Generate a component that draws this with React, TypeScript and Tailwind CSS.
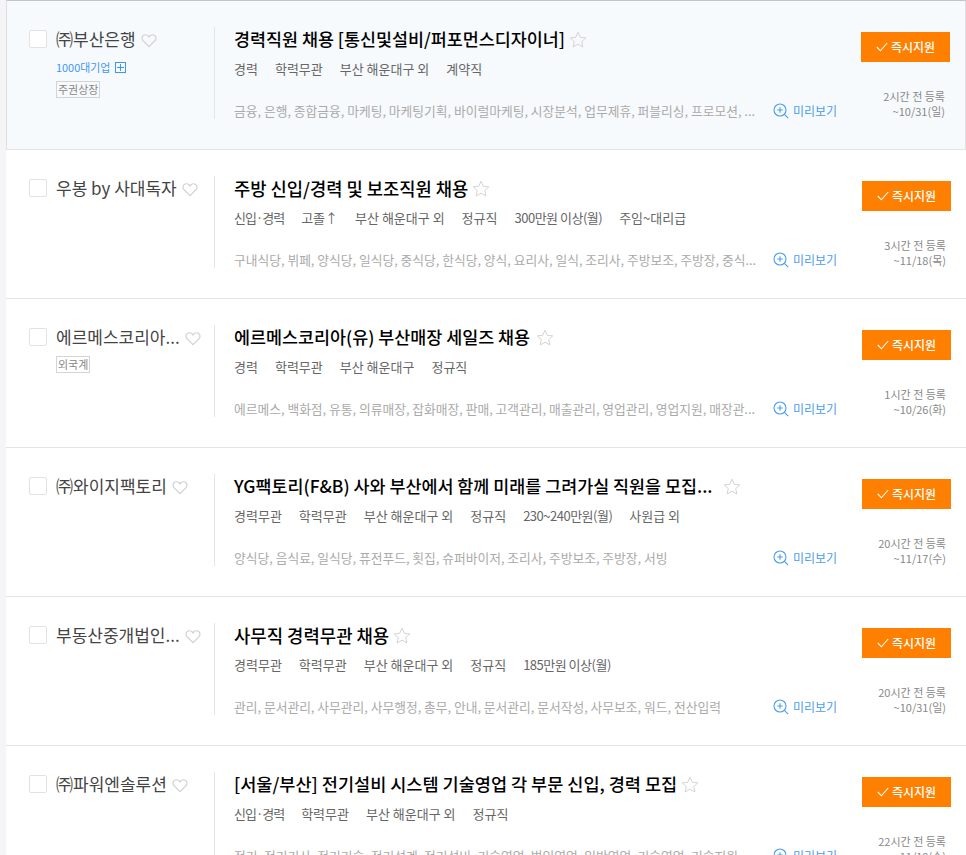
const FONT = "font-['Noto_Sans_CJK_KR','Noto_Sans',sans-serif]";

type Job = {
  company: string; tag?: string; bigTag?: boolean; titleSize: string; starGap: string;
  title: string; meta: string[]; skills: string; time: string; due: string; dueSuffix: string;
};

const jobs: Job[] = [
  { company: "㈜부산은행", bigTag: true, tag: "주권상장", titleSize: "text-[17.4px]", starGap: "ml-[4px]", title: "경력직원 채용 [통신및설비/퍼포먼스디자이너]", meta: ["경력", "학력무관", "부산 해운대구 외", "계약직"], skills: "금융, 은행, 종합금융, 마케팅, 마케팅기획, 바이럴마케팅, 시장분석, 업무제휴, 퍼블리싱, 프로모션, ...", time: "2시간 전 등록", due: "~10/31", dueSuffix: "(일)" },
  { company: "우봉 by 사대독자", titleSize: "text-[17.7px]", starGap: "ml-[4px]", title: "주방 신입/경력 및 보조직원 채용", meta: ["신입·경력", "고졸↑", "부산 해운대구 외", "정규직", "300만원 이상(월)", "주임~대리급"], skills: "구내식당, 뷔페, 양식당, 일식당, 중식당, 한식당, 양식, 요리사, 일식, 조리사, 주방보조, 주방장, 중식...", time: "3시간 전 등록", due: "~11/18", dueSuffix: "(목)" },
  { company: "에르메스코리아...", tag: "외국계", titleSize: "text-[17.4px]", starGap: "ml-[6px]", title: "에르메스코리아(유) 부산매장 세일즈 채용", meta: ["경력", "학력무관", "부산 해운대구", "정규직"], skills: "에르메스, 백화점, 유통, 의류매장, 잡화매장, 판매, 고객관리, 매출관리, 영업관리, 영업지원, 매장관...", time: "1시간 전 등록", due: "~10/26", dueSuffix: "(화)" },
  { company: "㈜와이지팩토리", titleSize: "text-[17.4px]", starGap: "ml-[10px]", title: "YG팩토리(F&B) 사와 부산에서 함께 미래를 그려가실 직원을 모집...", meta: ["경력무관", "학력무관", "부산 해운대구 외", "정규직", "230~240만원(월)", "사원급 외"], skills: "양식당, 음식료, 일식당, 퓨전푸드, 횟집, 슈퍼바이저, 조리사, 주방보조, 주방장, 서빙", time: "20시간 전 등록", due: "~11/17", dueSuffix: "(수)" },
  { company: "부동산중개법인...", titleSize: "text-[17.8px]", starGap: "ml-[4px]", title: "사무직 경력무관 채용", meta: ["경력무관", "학력무관", "부산 해운대구 외", "정규직", "185만원 이상(월)"], skills: "관리, 문서관리, 사무관리, 사무행정, 총무, 안내, 문서관리, 문서작성, 사무보조, 워드, 전산입력", time: "20시간 전 등록", due: "~10/31", dueSuffix: "(일)" },
  { company: "㈜파워엔솔루션", titleSize: "text-[17.55px]", starGap: "ml-[4px]", title: "[서울/부산] 전기설비 시스템 기술영업 각 부문 신입, 경력 모집", meta: ["신입·경력", "학력무관", "부산 해운대구 외", "정규직"], skills: "전기, 전기기사, 전기기술, 전기설계, 전기설비, 기술영업, 법인영업, 일반영업, 기술영업, 기술지원, ...", time: "22시간 전 등록", due: "~11/10", dueSuffix: "(수)" },
];

function Heart() {
  return (
    <svg width="16" height="15" viewBox="0 0 16 15" fill="none" stroke="#d0d0d0" strokeWidth="1.2" className="ml-[5px] shrink-0 mt-[2px]">
      <path d="M8 13.6 2.2 7.9C.6 6.3.7 3.9 2.1 2.6 3.6 1.3 5.9 1.5 7.2 3L8 4l.8-1c1.3-1.5 3.6-1.7 5.1-.4 1.4 1.3 1.5 3.7-.1 5.3L8 13.6Z" />
    </svg>
  );
}

function Star({ gap }: { gap: string }) {
  return (
    <svg width="18" height="17" viewBox="0 0 18 17" fill="none" stroke="#d4d4d4" strokeWidth="1" className={`${gap} shrink-0`}>
      <path d="M9 1.2 11.3 6.3 16.8 6.9 12.7 10.6 13.9 16 9 13.2 4.1 16 5.3 10.6 1.2 6.9 6.7 6.3Z" />
    </svg>
  );
}

function metaClass(m: string) {
  if (m.includes("만원")) return "text-[13px] leading-[20px] text-[#666] whitespace-nowrap tracking-[-0.5px]";
  if (m.includes("·")) return "text-[13px] leading-[20px] text-[#666] whitespace-nowrap tracking-[-1px]";
  return "text-[13px] leading-[20px] text-[#666] whitespace-nowrap";
}

function Row({ job, first }: { job: Job; first: boolean }) {
  return (
    <div className={first
      ? "h-[150px] flex items-start bg-[#f7fafd] border border-b-[#e4e4e4] border-x-[#e0e0e0] border-t-[#c4c4c4] pt-[26px] pl-[22px]"
      : "h-[149px] flex items-start bg-white border-b border-b-[#e4e4e4] pt-[26px] pl-[23px]"}>
      <div className="w-[18px] h-[18px] mt-[3px] bg-white border border-[#e2e2e2] rounded-[2px] shrink-0" />
      <div className="w-[158px] ml-[9px] shrink-0">
        <div className="flex items-center h-[24px]">
          <span className="text-[17px] leading-[24px] text-[#444] whitespace-nowrap">{job.company}</span>
          <Heart />
        </div>
        {job.bigTag && (
          <div className="flex items-center mt-[8px] h-[16px]">
            <span className="text-[10.9px] leading-[16px] text-[#3d96f5] whitespace-nowrap">1000대기업</span>
            <span className="ml-[5px] w-[11px] h-[11px] border border-[#3d96f5] flex items-center justify-center">
              <svg width="7" height="7" viewBox="0 0 7 7" stroke="#3d96f5" strokeWidth="1"><path d="M3.5 0v7M0 3.5h7" /></svg>
            </span>
          </div>
        )}
        {job.tag && (
          <div className={`${job.bigTag ? "mt-[6px]" : "mt-[7px]"} flex`}>
            <span className="border border-[#d4d4d4] text-[#888] text-[11px] leading-[15px] h-[17px] px-px whitespace-nowrap">{job.tag}</span>
          </div>
        )}
      </div>
      <div className="w-px h-[92px] bg-[#e4e4e4] shrink-0" />
      <div className="w-[622px] pl-[19px] shrink-0 flex flex-col h-[92px]">
        <div className="flex items-center h-[24px]">
          <span className={`${job.titleSize} leading-[24px] font-medium text-black whitespace-nowrap`}>{job.title}</span>
          <Star gap={job.starGap} />
        </div>
        <div className="flex gap-[17px] mt-[8px] h-[20px] items-center">
          {job.meta.map((m, i) => (
            <span key={i} className={metaClass(m)}>{m}</span>
          ))}
        </div>
        <div className="flex items-center mt-[22px] h-[20px]">
          <span className="w-[539px] shrink-0 text-[12.78px] leading-[20px] text-[#aaa] whitespace-nowrap">{job.skills}</span>
          <svg width="16" height="16" viewBox="0 0 16 16" fill="none" stroke="#4a9df0" strokeWidth="1.1" className="shrink-0">
            <circle cx="7" cy="7" r="6" /><path d="M7 4.2v5.6M4.2 7h5.6M11.4 11.4l3.8 3.8" />
          </svg>
          <span className="ml-[4px] text-[12px] leading-[20px] text-[#4a9df0] whitespace-nowrap">미리보기</span>
        </div>
      </div>
      <div className="flex-1 flex flex-col items-end pr-[15px] -mt-px">
        <button className="w-[89px] h-[30px] mt-[6px] bg-[#ff8000] text-white text-[12px] font-medium flex items-center justify-center gap-[3px]">
          <svg width="12" height="10" viewBox="0 0 12 10" fill="none" stroke="#fff" strokeWidth="1.1"><path d="M.8 5 4.4 8.8 11.2 1" /></svg>
          즉시지원
        </button>
        <div className="mt-[27px] text-[11px] leading-[15px] text-[#888] text-right whitespace-nowrap pr-[5px]">{job.time}</div>
        <div className="text-[11px] leading-[15px] text-[#888] text-right whitespace-nowrap pr-[5px]">{job.due}{job.dueSuffix}</div>
      </div>
    </div>
  );
}

export default function App() {
  return (
    <div className={`${FONT} h-[855px] w-[966px] overflow-hidden bg-[#f5f5f7] pl-[6px]`}>
      <div className="bg-white w-[960px]">
        {jobs.map((j, i) => <Row key={i} job={j} first={i === 0} />)}
      </div>
    </div>
  );
}
